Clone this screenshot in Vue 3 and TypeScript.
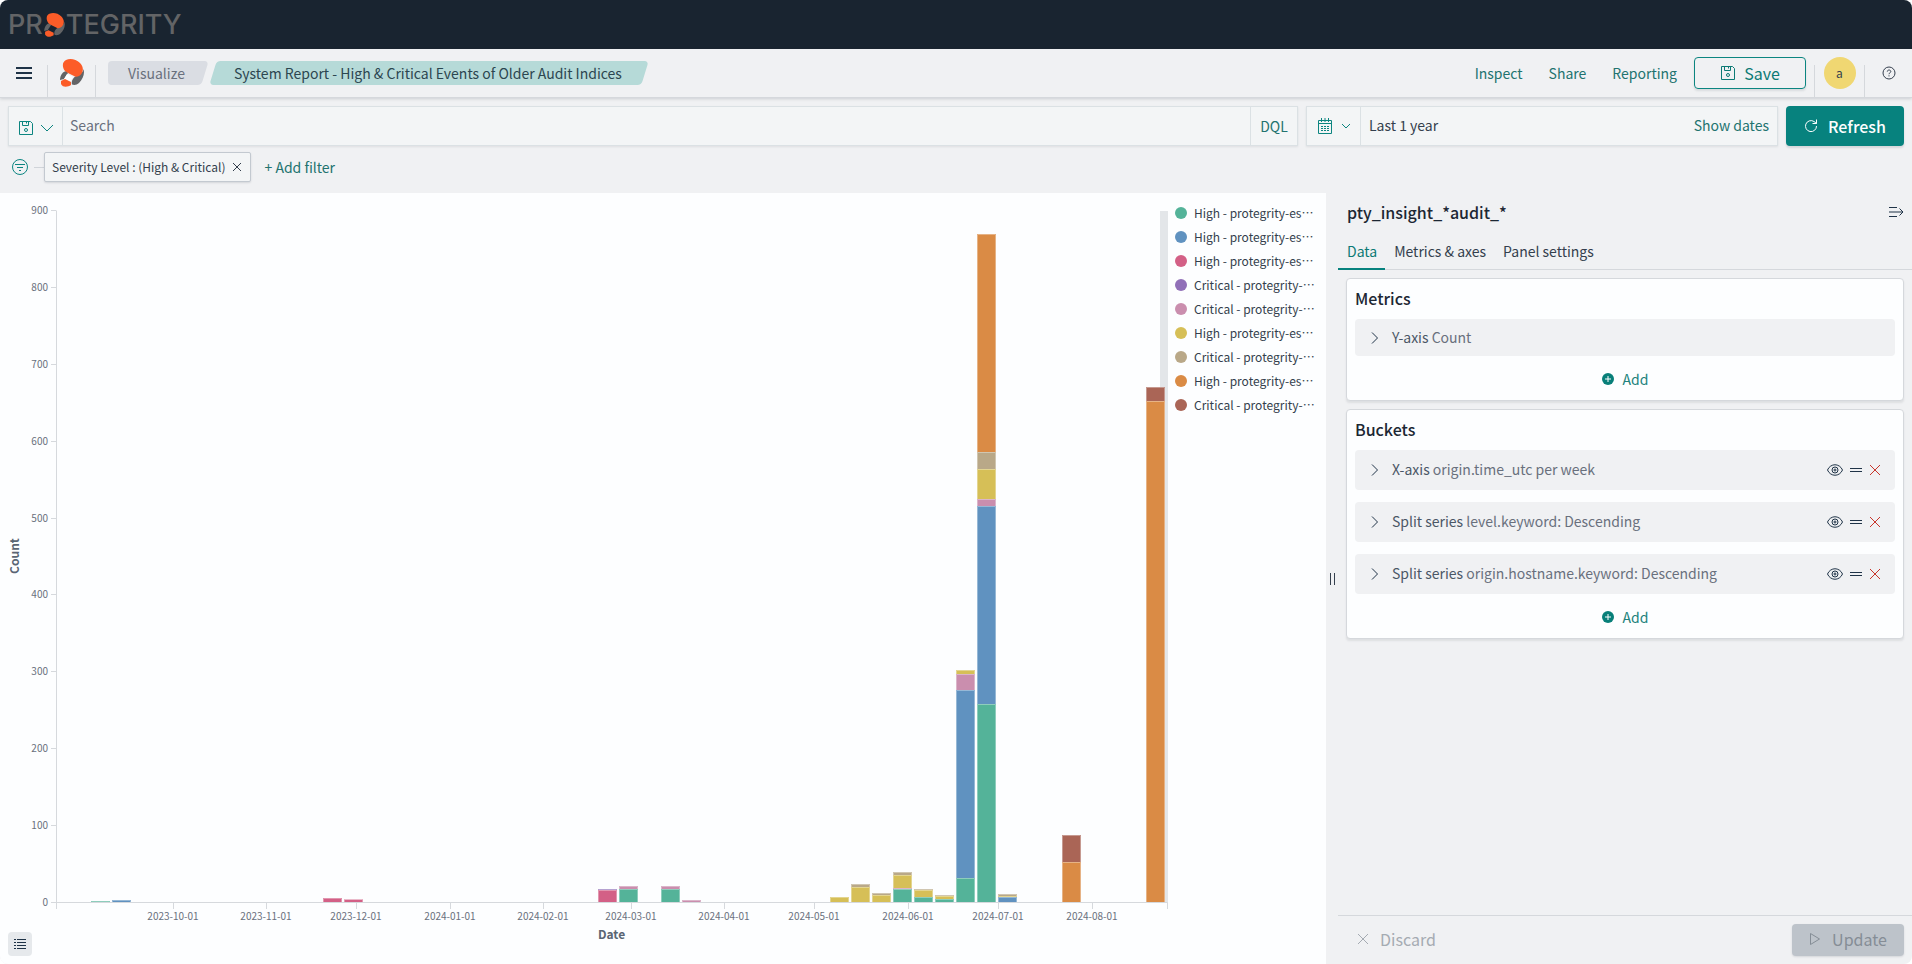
<script setup lang="ts">
import { computed, onBeforeUnmount, onMounted, ref } from 'vue'

type Segment = { color: string; count: number }
type Week = { start: string; segments: Segment[] }

const green = '#54b399'
const blue = '#6092c0'
const pink = '#d36086'
const purple = '#9170b8'
const mauve = '#ca8eae'
const yellow = '#d6bf57'
const tan = '#b9a888'
const orange = '#da8b45'
const brown = '#aa6556'

const seg = (color: string, count: number): Segment => ({ color, count })

const weeks: Week[] = [
  { start: '2023-09-04', segments: [seg(green, 2)] },
  { start: '2023-09-11', segments: [seg(blue, 3)] },
  { start: '2023-11-20', segments: [seg(pink, 6)] },
  { start: '2023-11-27', segments: [seg(pink, 4), seg(purple, 1)] },
  { start: '2024-02-19', segments: [seg(pink, 16), seg(purple, 1)] },
  { start: '2024-02-26', segments: [seg(green, 18), seg(mauve, 3)] },
  { start: '2024-03-11', segments: [seg(green, 18), seg(mauve, 3)] },
  { start: '2024-03-18', segments: [seg(mauve, 3)] },
  { start: '2024-05-06', segments: [seg(yellow, 7)] },
  { start: '2024-05-13', segments: [seg(yellow, 20), seg(tan, 4)] },
  { start: '2024-05-20', segments: [seg(yellow, 10), seg(tan, 3)] },
  { start: '2024-05-27', segments: [seg(green, 17), seg(mauve, 2), seg(yellow, 17), seg(tan, 4)] },
  { start: '2024-06-03', segments: [seg(green, 7), seg(yellow, 9), seg(tan, 1)] },
  { start: '2024-06-10', segments: [seg(green, 5), seg(yellow, 4), seg(tan, 1)] },
  { start: '2024-06-17', segments: [seg(green, 32), seg(blue, 244), seg(mauve, 21), seg(yellow, 5)] },
  {
    start: '2024-06-24',
    segments: [seg(green, 258), seg(blue, 258), seg(mauve, 9), seg(yellow, 39), seg(tan, 22), seg(orange, 284)],
  },
  { start: '2024-07-01', segments: [seg(blue, 7), seg(yellow, 2), seg(tan, 2)] },
  { start: '2024-07-22', segments: [seg(orange, 53), seg(brown, 35)] },
  { start: '2024-08-19', segments: [seg(orange, 652), seg(brown, 19)] },
]

const monthTicks = [
  '2023-10-01', '2023-11-01', '2023-12-01', '2024-01-01', '2024-02-01', '2024-03-01',
  '2024-04-01', '2024-05-01', '2024-06-01', '2024-07-01', '2024-08-01',
]
const countTicks = [0, 100, 200, 300, 400, 500, 600, 700, 800, 900]

const legend = [
  { color: green, label: 'High - protegrity-es⋯' },
  { color: blue, label: 'High - protegrity-es⋯' },
  { color: pink, label: 'High - protegrity-es⋯' },
  { color: purple, label: 'Critical - protegrity-⋯' },
  { color: mauve, label: 'Critical - protegrity-⋯' },
  { color: yellow, label: 'High - protegrity-es⋯' },
  { color: tan, label: 'Critical - protegrity-⋯' },
  { color: orange, label: 'High - protegrity-es⋯' },
  { color: brown, label: 'Critical - protegrity-⋯' },
]

const buckets = [
  { kind: 'X-axis', detail: 'origin.time_utc per week' },
  { kind: 'Split series', detail: 'level.keyword: Descending' },
  { kind: 'Split series', detail: 'origin.hostname.keyword: Descending' },
]

const tabs = ['Data', 'Metrics & axes', 'Panel settings']
const activeTab = ref('Data')
const query = ref('')

/* Chart geometry follows the measured size of its container. */
const host = ref<HTMLElement | null>(null)
const width = ref(1168)
const height = ref(771)
let observer: ResizeObserver | undefined

onMounted(() => {
  if (!host.value) return
  observer = new ResizeObserver(([entry]) => {
    width.value = Math.round(entry.contentRect.width)
    height.value = Math.round(entry.contentRect.height)
  })
  observer.observe(host.value)
})
onBeforeUnmount(() => observer?.disconnect())

const DAY = 86400000
const domainStart = Date.parse('2023-08-23T07:00:00Z')
const domainDays = 368.7
const left = 56
const top = 17
const right = computed(() => width.value - 1)
const bottom = computed(() => height.value - 62)

const xAt = (date: string) =>
  Math.round(left + ((Date.parse(date) - domainStart) / DAY / domainDays) * (right.value - left))
const yExact = (count: number) => bottom.value - (count / 900) * (bottom.value - top)
const yAt = (count: number) => Math.round(yExact(count))

const bars = computed(() =>
  weeks.flatMap((week) => {
    let total = 0
    const x = xAt(week.start)
    const w = Math.round((6.2 / domainDays) * (right.value - left))
    return week.segments.map((s) => {
      const y1 = Math.ceil(yExact(total))
      total += s.count
      const y0 = Math.ceil(yExact(total))
      return { x, y: y0, w, h: y1 - y0, color: s.color }
    })
  }),
)
</script>

<template>
  <div class="app">
    <header class="brand-bar">
      <a class="wordmark" href="#" aria-label="Protegrity">
        <span>PR</span>
        <svg class="wordmark-o" viewBox="0 0 24 28" aria-hidden="true">
          <path d="M23.500 10C25 15 23 20 19 24C17 26 14 26.500 12 25.500C11 22 13 19 16 17C20 15 23 14 23.500 10Z" fill="#636466" />
          <path d="M7 12C3 12 0 16 0 21L4 20L8 14Z" fill="#636466" />
          <path d="M5 12C2 8 2 3 6 1C10 -1 16 0 20 4C24 8 24 14 19 17C17 18 15 18 14 17L8 14Z" fill="#fc5c28" />
          <path d="M1 22L5 20L11 23V26C8 28 3 29 1 25Z" fill="#fc5c28" />
        </svg>
        <span>TEGRITY</span>
      </a>
    </header>

    <nav class="nav-bar">
      <button class="icon-btn menu" type="button" aria-label="Menu">
        <svg width="16" height="12" viewBox="0 0 16 12" stroke="#1f3347" stroke-width="2"><path d="M0 1H16M0 6H16M0 11H16" /></svg>
      </button>
      <a class="home" href="#" aria-label="Home">
        <svg width="24" height="28" viewBox="0 0 24 28">
          <path d="M23.500 10C25 15 23 20 19 24C17 26 14 26.500 12 25.500C11 22 13 19 16 17C20 15 23 14 23.500 10Z" fill="#636466" />
          <path d="M7 12C3 12 0 16 0 21L4 20L8 14Z" fill="#636466" />
          <path d="M5 12C2 8 2 3 6 1C10 -1 16 0 20 4C24 8 24 14 19 17C17 18 15 18 14 17L8 14Z" fill="#fc5c28" />
          <path d="M7 15L13 18L10 23L4 20Z" fill="#fdfeff" />
          <path d="M1 22L5 20L11 23V26C8 28 3 29 1 25Z" fill="#fc5c28" />
        </svg>
      </a>
      <div class="crumbs">
        <a class="crumb first" href="#">Visualize</a>
        <span class="crumb current">System Report - High &amp; Critical Events of Older Audit Indices</span>
      </div>
      <div class="nav-links">
        <a href="#">Inspect</a>
        <a href="#">Share</a>
        <a href="#">Reporting</a>
      </div>
      <button class="save" type="button">
        <svg width="16" height="16" viewBox="0 0 16 16" fill="none" stroke="currentColor">
          <path d="M1.5 1.5H12.5L14.5 3.5V14.5H1.5ZM4.5 1.5V5.5H10.5V1.5M8.5 1.5V3.5" /><circle cx="8" cy="10" r="1.5" />
        </svg>
        <span>Save</span>
      </button>
      <div class="account"><button class="avatar" type="button" aria-label="Account a">a</button></div>
      <button class="icon-btn help" type="button" aria-label="Help">
        <svg width="14" height="14" viewBox="0 0 14 14" fill="none" stroke="#343f4d">
          <circle cx="7" cy="7" r="6" /><path d="M5.3 5.6C5.3 3.5 8.8 3.5 8.8 5.6C8.8 6.8 7 6.7 7 8.2M7 9.3V10.4" />
        </svg>
      </button>
    </nav>

    <section class="query-row">
      <div class="search-box">
        <button class="saved" type="button" aria-label="Saved queries">
          <svg width="16" height="16" viewBox="0 0 16 16" fill="none" stroke="currentColor">
            <path d="M1.5 1.5H12.5L14.5 3.5V14.5H1.5ZM4.5 1.5V5.5H10.5V1.5M8.5 1.5V3.5" /><circle cx="8" cy="10" r="1.5" />
          </svg>
          <svg width="14" height="14" viewBox="0 0 14 14" fill="none" stroke="currentColor"><path d="M1 4L7 10L13 4" /></svg>
        </button>
        <input v-model="query" type="text" placeholder="Search" aria-label="Search" />
        <button class="dql" type="button">DQL</button>
      </div>
      <div class="date-box">
        <button class="calendar" type="button" aria-label="Quick date select">
          <svg width="16" height="16" viewBox="0 0 16 16" fill="none" stroke="currentColor">
            <path d="M1.5 2.5H14.5V15.5H1.5ZM1.5 5.5H14.5M4.5 0V4M8 0V4M11.5 0V4" />
            <path d="M4 8.5H12M4 10.5H12M4 12.5H12" stroke-dasharray="2 1" />
          </svg>
          <svg width="10" height="10" viewBox="0 0 10 10" fill="none" stroke="currentColor"><path d="M1 3L5 7L9 3" /></svg>
        </button>
        <button class="range" type="button">Last 1 year</button>
        <button class="show-dates" type="button">Show dates</button>
      </div>
      <button class="refresh" type="button">
        <svg width="14" height="14" viewBox="0 0 14 14" fill="none" stroke="currentColor">
          <path d="M12.5 7A5.5 5.5 0 1 1 10 2.5L12.5 4.5M12.5 0.5V4.5H8.5" />
        </svg>
        <span>Refresh</span>
      </button>
    </section>

    <section class="filter-row">
      <button class="icon-btn filter-all" type="button" aria-label="All filters">
        <svg width="18" height="18" viewBox="0 0 18 18" fill="none" stroke="#0c8580">
          <circle cx="9" cy="9" r="7.5" /><path d="M4 6.5H14M6 9.5H12M8 12.5H10" />
        </svg>
      </button>
      <span class="filter-line"></span>
      <div class="chip">
        <button class="chip-label" type="button">Severity Level : (High &amp; Critical)</button>
        <button class="icon-btn" type="button" aria-label="Remove filter">
          <svg width="10" height="10" viewBox="0 0 10 10" stroke="#343f4d"><path d="M1 1L9 9M9 1L1 9" /></svg>
        </button>
      </div>
      <button class="add-filter" type="button">+ Add filter</button>
    </section>

    <main class="workspace">
      <section class="visual">
        <div ref="host" class="plot">
          <svg class="chart" :viewBox="`0 0 ${width} ${height}`" role="img" aria-label="Count by date">
            <rect :x="right - 7" :y="top + 1" width="8" :height="bottom - top" fill="#e3e6e9" />
            <g class="axis">
              <path :d="`M${left + 0.5} ${top + 0.5}V${bottom + 7}M${left - 5} ${bottom + 0.5}H${right + 0.5}V${bottom + 7}`" />
              <path v-for="t in countTicks" :key="t" :d="`M${left - 5} ${yAt(t) + 0.5}H${left}`" />
              <path v-for="m in monthTicks" :key="m" :d="`M${xAt(m) + 0.5} ${bottom}V${bottom + 7}`" />
            </g>
            <g v-for="(b, i) in bars" :key="i">
              <rect :x="b.x" :y="b.y" :width="b.w" :height="b.h" :fill="b.color" />
              <path class="edge" :d="`M${b.x + 0.5} ${b.y + b.h}V${b.y + 0.5}H${b.x + b.w - 0.5}V${b.y + b.h}`" />
            </g>
            <g class="ticks">
              <text v-for="t in countTicks" :key="t" :x="left - 8" :y="yAt(t) + 4" text-anchor="end">{{ t }}</text>
              <text v-for="m in monthTicks" :key="m" :x="xAt(m)" :y="bottom + 18" text-anchor="middle">{{ m }}</text>
            </g>
            <g class="titles">
              <text :x="(left + right) / 2" :y="bottom + 37" text-anchor="middle">Date</text>
              <text :transform="`translate(19 ${Math.round((top + bottom) / 2)}) rotate(-90)`" text-anchor="middle">Count</text>
            </g>
          </svg>
        </div>
        <ul class="legend" lang="zh-CN">
          <li v-for="(item, i) in legend" :key="i">
            <svg width="12" height="12" viewBox="0 0 12 12"><circle cx="6" cy="6" r="6" :fill="item.color" /></svg>
            <span>{{ item.label }}</span>
          </li>
        </ul>
        <button class="legend-toggle" type="button" aria-label="Toggle legend">
          <svg width="12" height="12" viewBox="0 0 12 12" stroke="#1f3347">
            <path d="M0 1.5H2M3 1.5H12M0 4.5H2M3 4.5H12M0 7.5H2M3 7.5H12M0 10.5H2M3 10.5H12" />
          </svg>
        </button>
      </section>

      <aside class="side">
        <div class="resizer" role="separator">
          <svg width="5" height="12" viewBox="0 0 5 12" stroke="#343f4d"><path d="M0.5 0V12M4.5 0V12" /></svg>
        </div>
        <div class="editor">
          <div class="editor-head">
            <h2>pty_insight_*audit_*</h2>
            <button class="icon-btn" type="button" aria-label="Collapse panel">
              <svg width="15" height="12" viewBox="0 0 15 12" fill="none" stroke="#1f3347">
                <path d="M0 1.5H8M0 6H14M0 10.5H8M10.5 2.5L14 6L10.5 9.5" />
              </svg>
            </button>
          </div>
          <div class="tabs" role="tablist">
            <button
              v-for="tab in tabs"
              :key="tab"
              type="button"
              role="tab"
              :aria-selected="tab === activeTab"
              :class="{ active: tab === activeTab }"
              @click="activeTab = tab"
            >{{ tab }}</button>
          </div>

          <div class="card">
            <h3>Metrics</h3>
            <div class="agg metric">
              <button class="agg-name" type="button">
                <svg width="8" height="12" viewBox="0 0 8 12" fill="none" stroke="#1f3347"><path d="M1 0.5L6.5 6L1 11.5" /></svg>
                <span><b>Y-axis</b> Count</span>
              </button>
            </div>
            <button class="add" type="button">
              <svg width="12" height="12" viewBox="0 0 12 12"><circle cx="6" cy="6" r="6" fill="#087f79" /><path d="M6 3V9M3 6H9" stroke="#fdfeff" /></svg>
              <span>Add</span>
            </button>
          </div>

          <div class="card">
            <h3>Buckets</h3>
            <div v-for="b in buckets" :key="b.detail" class="agg">
              <button class="agg-name" type="button">
                <svg width="8" height="12" viewBox="0 0 8 12" fill="none" stroke="#1f3347"><path d="M1 0.5L6.5 6L1 11.5" /></svg>
                <span><b>{{ b.kind }}</b> {{ b.detail }}</span>
              </button>
              <button class="icon-btn" type="button" aria-label="Disable aggregation">
                <svg width="16" height="12" viewBox="0 0 16 12" fill="none" stroke="#1f3347">
                  <path d="M0.5 6C3.5 -1 12.5 -1 15.5 6C12.5 13 3.5 13 0.5 6Z" /><circle cx="8" cy="6" r="3" /><circle cx="8" cy="6" r="1" />
                </svg>
              </button>
              <button class="icon-btn" type="button" aria-label="Reorder">
                <svg width="12" height="12" viewBox="0 0 12 12" stroke="#1f3347"><path d="M0 4.5H12M0 7.5H12" /></svg>
              </button>
              <button class="icon-btn" type="button" aria-label="Remove aggregation">
                <svg width="12" height="12" viewBox="0 0 12 12" stroke="#c8352b"><path d="M1 1L11 11M11 1L1 11" /></svg>
              </button>
            </div>
            <button class="add" type="button">
              <svg width="12" height="12" viewBox="0 0 12 12"><circle cx="6" cy="6" r="6" fill="#087f79" /><path d="M6 3V9M3 6H9" stroke="#fdfeff" /></svg>
              <span>Add</span>
            </button>
          </div>

          <footer class="actions">
            <button class="discard" type="button" disabled>
              <svg width="12" height="12" viewBox="0 0 12 12" stroke="currentColor"><path d="M1 1L11 11M11 1L1 11" /></svg>
              <span>Discard</span>
            </button>
            <button class="update" type="button" disabled>
              <svg width="12" height="14" viewBox="0 0 12 14" fill="none" stroke="currentColor"><path d="M1.5 1.5V12.5L10.5 7Z" stroke-linejoin="round" /></svg>
              <span>Update</span>
            </button>
          </footer>
        </div>
      </aside>
    </main>
  </div>
</template>

<style>
body {
  margin: 0;
  background: #fff;
}
</style>

<style scoped>
.app {
  display: flex;
  flex-direction: column;
  min-height: 100vh;
  overflow: hidden;
  box-sizing: border-box;
  border-radius: 8px;
  background: #f0f1f3;
  color: #343f4d;
  font-family: "Noto Sans CJK SC", "Noto Sans", sans-serif;
  font-size: 14px;
  line-height: 20px;
}
.app *,
.app *::before,
.app *::after {
  box-sizing: border-box;
}
button,
input {
  font: inherit;
  color: inherit;
  background: none;
  border: 0;
  padding: 0;
  margin: 0;
}
a {
  color: inherit;
  text-decoration: none;
}
svg {
  display: block;
  flex: none;
}
.icon-btn {
  display: flex;
  align-items: center;
  justify-content: center;
}

.brand-bar {
  height: 49px;
  flex: none;
  background: #192430;
  display: flex;
  align-items: center;
  padding: 0 8px;
}
.wordmark {
  display: flex;
  align-items: center;
  gap: 1px;
  font-family: Inter, sans-serif;
  font-size: 27px;
  line-height: 48px;
  font-weight: 500;
  color: #636466;
}
.wordmark-o {
  width: 21px;
  height: 24px;
}

.nav-bar {
  height: 49px;
  flex: none;
  display: flex;
  align-items: center;
  border-bottom: 1px solid #d5d8dc;
  box-shadow: 0 1px 3px rgba(60, 70, 80, 0.2);
}
.menu {
  width: 47px;
  height: 48px;
}
.home {
  align-self: flex-end;
  width: 49px;
  height: 32px;
  border: 1px solid #d5d8dc;
  border-width: 0 1px;
  display: flex;
  justify-content: center;
}
.home svg {
  margin-top: -6px;
}
.crumbs {
  display: flex;
  gap: 4px;
  padding-left: 12px;
  flex: 1;
  min-width: 0;
}
.crumb {
  position: relative;
  z-index: 0;
  height: 24px;
  line-height: 24px;
  padding: 0 21px 0 20px;
  color: #69707d;
  white-space: nowrap;
}
.crumb::before {
  content: "";
  position: absolute;
  inset: 0 1px 0 4px;
  z-index: -1;
  border-radius: 4px;
  background: #dadde3;
  transform: skewX(-17deg);
}
.crumb.first::after {
  content: "";
  position: absolute;
  inset: 0 16px 0 0;
  z-index: -1;
  border-radius: 4px;
  background: #dadde3;
}
.crumb.current {
  color: #2c4650;
  padding: 0 25px 0 24px;
}
.crumb.current::before {
  inset: 0 2px 0 3px;
  background: #b6dad8;
}
.nav-links {
  display: flex;
  gap: 26px;
  color: #22736f;
  margin-right: 17px;
}
.save {
  display: flex;
  align-items: center;
  justify-content: center;
  gap: 8px;
  width: 112px;
  height: 32px;
  border: 1px solid #0c8580;
  border-radius: 4px;
  color: #0c7a75;
  font-size: 16px;
  box-shadow: 0 2px 2px rgba(60, 70, 80, 0.12);
}
.account {
  align-self: flex-end;
  width: 51px;
  height: 32px;
  margin-left: 8px;
  border: 1px solid #d5d8dc;
  border-width: 0 1px;
  display: flex;
  justify-content: center;
}
.avatar {
  width: 32px;
  height: 32px;
  margin-top: -8px;
  border-radius: 50%;
  background: #f0d772;
  color: #343f4d;
  font-size: 12px;
}
.help {
  width: 47px;
  height: 48px;
}

.query-row {
  display: flex;
  gap: 8px;
  padding: 8px 8px 0;
}
.search-box,
.date-box {
  display: flex;
  height: 40px;
  background: #f3f5f6;
  border: 1px solid #dbe1e4;
  box-shadow: 0 1px 2px rgba(60, 70, 80, 0.1);
}
.search-box {
  flex: 1;
}
.saved {
  display: flex;
  align-items: center;
  justify-content: center;
  gap: 6px;
  width: 54px;
  padding-top: 4px;
  color: #0c8580;
  border-right: 1px solid #dbe1e4;
}
.search-box input {
  flex: 1;
  min-width: 0;
  padding: 0 7px 2px;
  outline: none;
}
.search-box input::placeholder {
  color: #69707d;
  opacity: 1;
}
.dql {
  width: 47px;
  border-left: 1px solid #dbe1e4;
  color: #22736f;
}
.date-box {
  width: 472px;
}
.calendar {
  display: flex;
  align-items: center;
  justify-content: center;
  gap: 8px;
  width: 54px;
  color: #0c8580;
  border-right: 1px solid #dbe1e4;
}
.range,
.show-dates {
  padding-bottom: 2px;
}
.range {
  flex: 1;
  text-align: left;
  padding-left: 8px;
}
.show-dates {
  color: #22736f;
  padding-right: 8px;
}
.refresh {
  display: flex;
  align-items: center;
  justify-content: center;
  gap: 10px;
  width: 118px;
  height: 40px;
  border-radius: 4px;
  background: #07827e;
  color: #fdfeff;
  font-size: 16px;
  font-weight: 500;
  box-shadow: 0 2px 2px rgba(60, 70, 80, 0.15);
}

.filter-row {
  display: flex;
  align-items: center;
  padding: 6px 8px 11px 11px;
}
.filter-line {
  width: 10px;
  height: 1px;
  margin-left: 5px;
  background: #d0d4d9;
}
.chip {
  display: flex;
  align-items: center;
  gap: 6px;
  height: 30px;
  padding: 0 8px 0 7px;
  border: 1px solid #c3c9d0;
  border-radius: 2px;
  background: #f3f5f6;
  box-shadow: 0 1px 2px rgba(60, 70, 80, 0.15);
  font-size: 12px;
}
.add-filter {
  margin-left: 14px;
  color: #22736f;
}

.workspace {
  flex: 1;
  display: grid;
  grid-template-columns: 1326fr 586fr;
}
.visual {
  position: relative;
  display: flex;
  min-width: 0;
  background: #fdfeff;
}
.plot {
  flex: 1;
  min-width: 0;
  overflow: hidden;
}
.chart {
  width: 100%;
  height: 100%;
}
.axis path {
  fill: none;
  stroke: #d6d9dd;
}
.edge {
  fill: none;
  stroke: #fdfeff;
  stroke-opacity: 0.35;
}
.ticks text {
  font-size: 10px;
  fill: #69707d;
}
.titles text {
  font-size: 12px;
  font-weight: 700;
  fill: #5a6573;
}
.legend {
  list-style: none;
  margin: 0;
  padding: 8px 4px 0 7px;
  width: 158px;
  font-size: 12px;
}
.legend li {
  display: flex;
  align-items: center;
  gap: 7px;
  height: 24px;
  white-space: nowrap;
}
.legend-toggle {
  position: absolute;
  left: 8px;
  bottom: 8px;
  width: 24px;
  height: 24px;
  display: flex;
  align-items: center;
  justify-content: center;
  border-radius: 4px;
  background: #e6e9ec;
}

.side {
  display: flex;
  min-width: 0;
}
.resizer {
  width: 12px;
  display: flex;
  align-items: center;
  justify-content: center;
}
.editor {
  flex: 1;
  min-width: 0;
  display: flex;
  flex-direction: column;
}
.editor-head {
  display: flex;
  align-items: center;
  justify-content: space-between;
  padding: 8px 8px 2px 9px;
  height: 32px;
}
h2,
h3 {
  margin: 0;
  font-size: 16px;
  line-height: 22px;
  font-weight: 500;
  color: #1c2733;
}
.tabs {
  display: flex;
  height: 45px;
  border-bottom: 1px solid #d5d8dc;
}
.tabs button {
  padding: 9px 8px 0 9px;
  height: 45px;
  border-bottom: 2px solid transparent;
}
.tabs .active {
  color: #0c7a75;
  border-color: #07827e;
}
.card {
  margin: 8px 8px 0;
  padding: 8px;
  border: 1px solid #d5d8dc;
  border-radius: 4px;
  background: #fdfeff;
  box-shadow: 0 2px 2px rgba(60, 70, 80, 0.1);
}
h3 {
  margin-bottom: 10px;
}
.agg {
  display: flex;
  align-items: center;
  gap: 7px;
  height: 40px;
  margin-bottom: 12px;
  padding: 0 14px 0 16px;
  border-radius: 4px;
  background: #f0f1f3;
}
.agg.metric {
  height: 37px;
}
.agg-name {
  flex: 1;
  display: flex;
  align-items: center;
  gap: 13px;
  text-align: left;
  color: #69707d;
}
.agg-name span {
  padding-bottom: 2px;
}
.agg-name b {
  font-weight: 400;
  color: #4b5766;
}
.add {
  display: flex;
  align-items: center;
  gap: 9px;
  margin: 0 auto;
  height: 24px;
  padding-bottom: 2px;
  color: #22827c;
}
.actions {
  margin-top: auto;
  display: flex;
  align-items: center;
  justify-content: space-between;
  border-top: 1px solid #d5d8dc;
  padding: 8px 8px 8px 19px;
  font-size: 16px;
}
.discard,
.update {
  display: flex;
  align-items: center;
  height: 32px;
  gap: 11px;
  padding-bottom: 2px;
}
.discard {
  color: #a5abb2;
}
.update {
  width: 112px;
  justify-content: center;
  border-radius: 4px;
  background: #bdc3ca;
  color: #858d96;
  box-shadow: 0 1px 2px rgba(60, 70, 80, 0.15);
}
</style>
